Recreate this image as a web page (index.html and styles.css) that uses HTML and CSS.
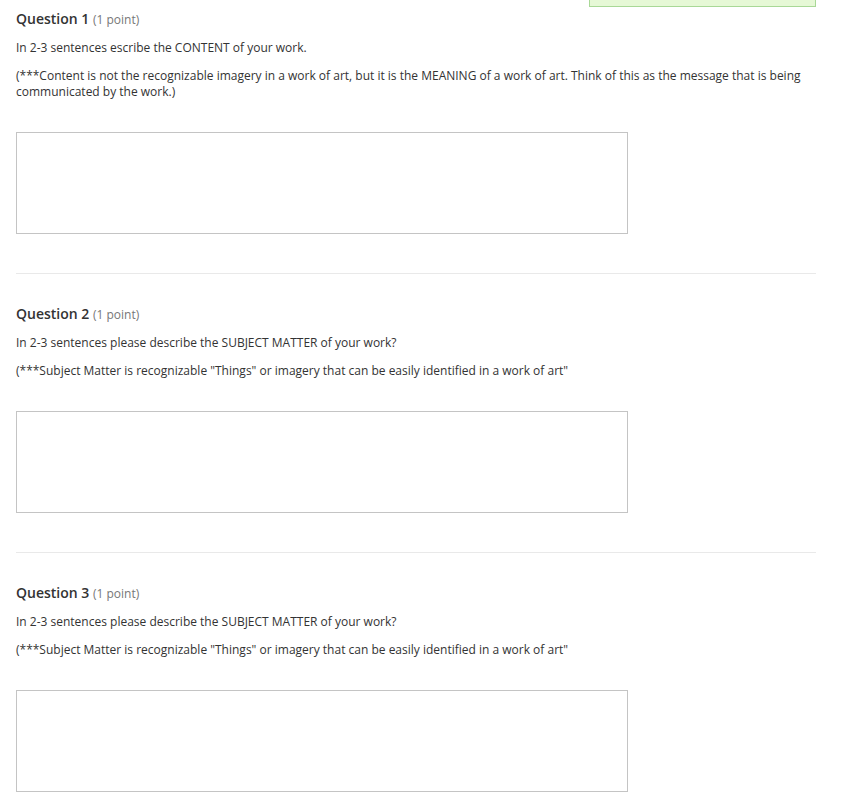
FILE: index.html
```html
<!DOCTYPE html>
<html>
<head>
<meta charset="utf-8">
<link rel="stylesheet" href="styles.css">
</head>
<body>
<div class="page">
  <div class="topbar-row"><div class="notice"></div></div>

  <div class="question first">
    <h3 class="q-title">Question 1 <span class="points">(1 point)</span></h3>
    <p>In 2-3 sentences escribe the CONTENT of your work.</p>
    <p>(***Content is not the recognizable imagery in a work of art, but it is the MEANING of a work of art. Think of this as the message that is being communicated by the work.)</p>
    <textarea class="answer"></textarea>
  </div>

  <div class="question">
    <h3 class="q-title">Question 2 <span class="points">(1 point)</span></h3>
    <p>In 2-3 sentences please describe the SUBJECT MATTER of your work?</p>
    <p>(***Subject Matter is recognizable "Things" or imagery that can be easily identified in a work of art"</p>
    <textarea class="answer"></textarea>
  </div>

  <div class="question">
    <h3 class="q-title">Question 3 <span class="points">(1 point)</span></h3>
    <p>In 2-3 sentences please describe the SUBJECT MATTER of your work?</p>
    <p>(***Subject Matter is recognizable "Things" or imagery that can be easily identified in a work of art"</p>
    <textarea class="answer"></textarea>
  </div>
</div>
</body>
</html>
```

FILE: styles.css
```css
html, body {
  margin: 0;
  padding: 0;
  background: #fff;
}

body {
  font-family: "Open Sans", "Liberation Sans", sans-serif;
  font-size: 12px;
  color: #333;
}

.page {
  width: 800px;
  padding-left: 16px;
}

.topbar-row {
  display: flex;
  justify-content: flex-end;
  margin-bottom: 2px;
}

.notice {
  width: 225px;
  height: 6px;
  background: #e6f8d6;
  border: 1px solid #a9d897;
  border-top: none;
}

.question {
  padding: 30px 0 39px;
  border-bottom: 1px solid #e9e9e9;
}

.question.first {
  padding-top: 0;
}

.q-title {
  margin: 0 0 10px;
  font-size: 14px;
  font-weight: 600;
  line-height: 20px;
  color: #333;
}

.points {
  font-size: 12px;
  font-weight: 400;
  color: #777;
}

.question p {
  margin: 0 0 12px;
  line-height: 16px;
}

.answer {
  display: block;
  box-sizing: border-box;
  width: 612px;
  height: 102px;
  margin: 32px 0 0;
  padding: 4px;
  border: 1px solid #c4c4c4;
  border-radius: 0;
  resize: none;
  font-family: inherit;
  font-size: 12px;
  background: #fff;
}
```
